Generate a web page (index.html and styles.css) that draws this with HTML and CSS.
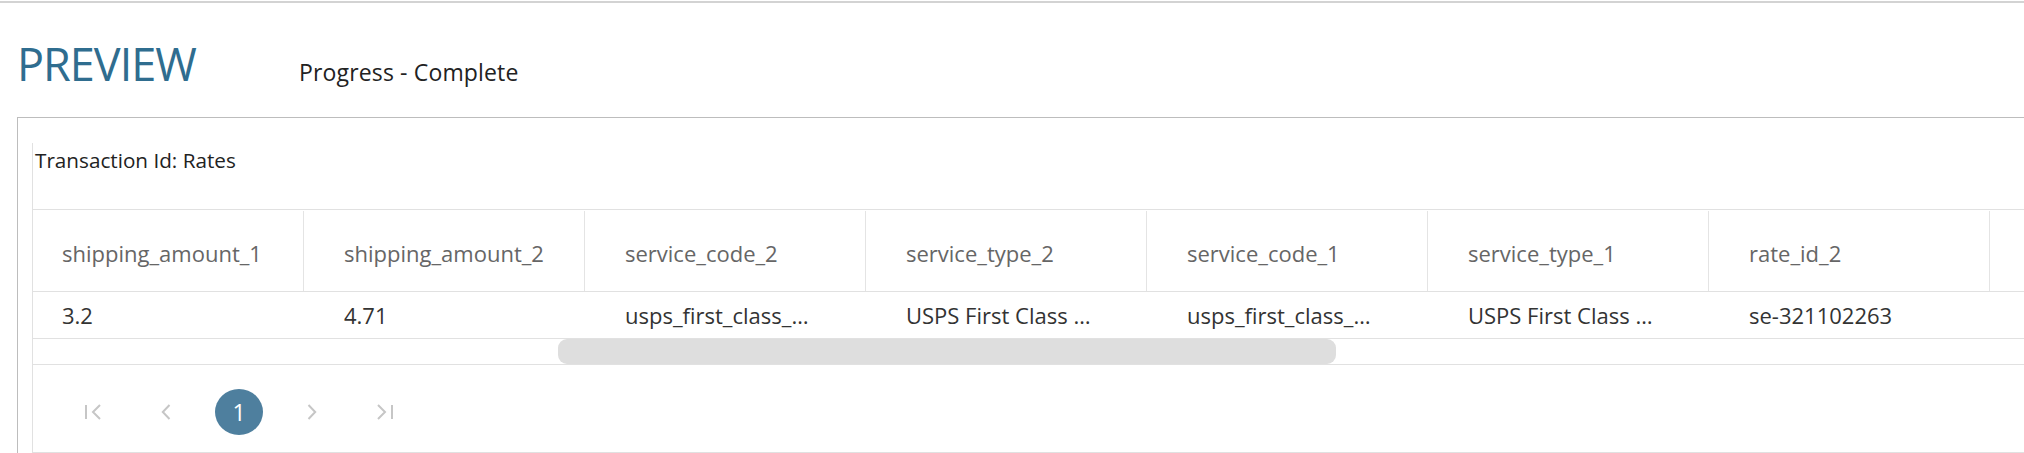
FILE: index.html
```html
<!DOCTYPE html>
<html lang="en">
<head>
<meta charset="utf-8">
<title>Preview</title>
<link rel="stylesheet" href="styles.css">
</head>
<body>
<div class="topbar"></div>
<header class="head">
  <h1 class="title">PREVIEW</h1>
  <span class="status">Progress - Complete</span>
</header>
<section class="panel">
  <div class="inner">
    <div class="caption">Transaction Id: Rates</div>
    <div class="table">
      <div class="trow thead">
        <div class="th first">shipping_amount_1</div>
        <div class="th">shipping_amount_2</div>
        <div class="th">service_code_2</div>
        <div class="th">service_type_2</div>
        <div class="th">service_code_1</div>
        <div class="th">service_type_1</div>
        <div class="th">rate_id_2</div>
        <div class="th"></div>
      </div>
      <div class="trow tbody">
        <div class="td first">3.2</div>
        <div class="td">4.71</div>
        <div class="td">usps_first_class_mail</div>
        <div class="td">USPS First Class Mail</div>
        <div class="td">usps_first_class_mail</div>
        <div class="td">USPS First Class Mail</div>
        <div class="td">se-321102263</div>
        <div class="td"></div>
      </div>
    </div>
    <div class="scroll"><div class="thumb"></div></div>
    <nav class="pager">
      <span class="pg-item">
        <svg width="18" height="16" viewBox="0 0 18 16"><path d="M2 1v14M16 1L9 8l7 7" fill="none" stroke="#c6c6c6" stroke-width="2"/></svg>
      </span>
      <span class="pg-item">
        <svg width="10" height="16" viewBox="0 0 10 16"><path d="M8.5 1L1.8 8l6.7 7" fill="none" stroke="#c6c6c6" stroke-width="2"/></svg>
      </span>
      <span class="pg-item pg-current">1</span>
      <span class="pg-item">
        <svg width="10" height="16" viewBox="0 0 10 16"><path d="M1.5 1l6.7 7-6.7 7" fill="none" stroke="#c6c6c6" stroke-width="2"/></svg>
      </span>
      <span class="pg-item">
        <svg width="18" height="16" viewBox="0 0 18 16"><path d="M2 1l7 7-7 7M16 1v14" fill="none" stroke="#c6c6c6" stroke-width="2"/></svg>
      </span>
    </nav>
  </div>
</section>
</body>
</html>
```
FILE: styles.css
```css
html, body {
  margin: 0;
  padding: 0;
  background: #ffffff;
  overflow: hidden;
}
body {
  font-family: "Open Sans", "Noto Sans", sans-serif;
  color: #222222;
  width: 2024px;
  height: 453px;
}
.topbar {
  height: 2px;
  margin-top: 1px;
  background: #d3d3d3;
}
.head {
  display: flex;
  align-items: baseline;
  padding: 38px 0 0 17px;
  height: 76px;
  box-sizing: content-box;
}
.title {
  margin: 0;
  font-weight: 400;
  font-size: 45px;
  line-height: 45px;
  letter-spacing: -1px;
  color: #2f6d8f;
  width: 282px;
}
.status {
  font-size: 23px;
  line-height: 30px;
  letter-spacing: 0.15px;
  color: #222222;
}
.panel {
  border-top: 1px solid #bdbdbd;
  border-left: 1px solid #bdbdbd;
  margin-left: 17px;
  padding: 25px 0 0 14px;
  height: 310px;
}
.inner {
  border-left: 1px solid #e1e1e1;
  overflow: hidden;
  height: 100%;
}
.caption {
  font-size: 20.7px;
  line-height: 30px;
  padding: 2px 0 0 2px;
  color: #222222;
}
.table {
  margin-top: 34px;
  border-top: 1px solid #e1e1e1;
}
.trow {
  display: grid;
  grid-template-columns: 271px repeat(7, 281px);
  width: max-content;
  font-size: 22px;
  line-height: 30px;
}
.thead {
  padding-top: 1px;
  border-bottom: 1px solid #e1e1e1;
}
.th {
  height: 80px;
  box-sizing: border-box;
  display: flex;
  align-items: center;
  padding: 3px 0 0 40px;
  border-right: 1px solid #e4e4e4;
  color: #666666;
}
.th.first, .td.first {
  padding-left: 29px;
}
.tbody {
  border-bottom: 1px solid #e1e1e1;
}
.td {
  height: 46px;
  box-sizing: border-box;
  padding: 8px 50px 8px 40px;
  color: #333333;
  white-space: nowrap;
  overflow: hidden;
  text-overflow: ellipsis;
}
.scroll {
  height: 25px;
  border-bottom: 1px solid #e1e1e1;
  display: flex;
}
.thumb {
  margin-left: 525px;
  width: 778px;
  height: 25px;
  border-radius: 9px;
  background: #dedede;
}
.pager {
  display: flex;
  align-items: center;
  gap: 25px;
  padding: 24px 0 17px 36px;
  border-bottom: 1px solid #e1e1e1;
}
.pg-item {
  width: 48px;
  height: 46px;
  display: flex;
  align-items: center;
  justify-content: center;
}
.pg-current {
  border-radius: 50%;
  background: #4e7f9e;
  color: #ffffff;
  font-size: 23px;
  line-height: 30px;
}
```
